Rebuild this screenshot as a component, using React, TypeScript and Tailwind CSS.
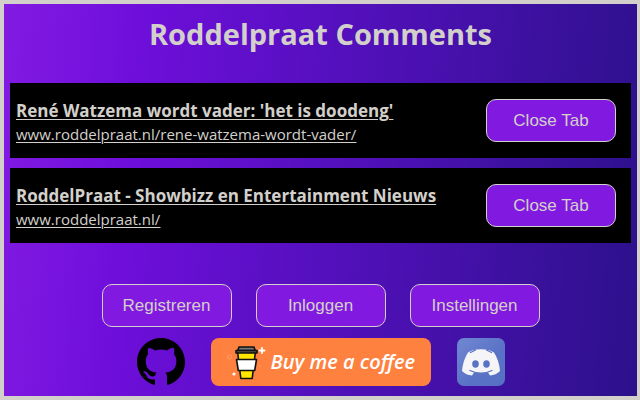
import React from "react";

type Tab = { title: string; url: string };

const tabs: Tab[] = [
  {
    title: "René Watzema wordt vader: 'het is doodeng'",
    url: "www.roddelpraat.nl/rene-watzema-wordt-vader/",
  },
  {
    title: "RoddelPraat - Showbizz en Entertainment Nieuws",
    url: "www.roddelpraat.nl/",
  },
];

function Button({ children }: { children: React.ReactNode }) {
  return (
    <button
      type="button"
      className="h-[43px] w-[130px] shrink-0 rounded-[10px] border border-[#d3d0cb] bg-[#8219e0] font-['Liberation_Sans',Arial,sans-serif] text-[17px] text-[#d3d0cb]"
    >
      {children}
    </button>
  );
}

function TabRow({ title, url }: Tab) {
  return (
    <li className="flex h-[75px] items-center justify-between bg-black pr-[15px] pl-[6px]">
      <div className="flex flex-col items-start pt-[2px] whitespace-nowrap underline decoration-1 underline-offset-2">
        <a href={`https://${url}`} className="text-[17px] leading-6 font-bold">
          {title}
        </a>
        <a href={`https://${url}`} className="text-[15px] leading-[22px]">
          {url}
        </a>
      </div>
      <Button>Close Tab</Button>
    </li>
  );
}

function GithubIcon() {
  return (
    <svg viewBox="0 0 16 16" className="size-12" fill="#000" aria-hidden="true">
      <path d="M8 0C3.58 0 0 3.58 0 8c0 3.54 2.29 6.53 5.47 7.59.4.07.55-.17.55-.38 0-.19-.01-.82-.01-1.49-2.01.37-2.53-.49-2.69-.94-.09-.23-.48-.94-.82-1.13-.28-.15-.68-.52-.01-.53.63-.01 1.08.58 1.23.82.72 1.21 1.87.87 2.33.66.07-.52.28-.87.51-1.07-1.78-.2-3.64-.89-3.64-3.95 0-.87.31-1.59.82-2.15-.08-.2-.36-1.02.08-2.12 0 0 .67-.21 2.2.82a7.6 7.6 0 0 1 4 0c1.53-1.04 2.2-.82 2.2-.82.44 1.1.16 1.92.08 2.12.51.56.82 1.27.82 2.15 0 3.07-1.87 3.75-3.65 3.95.29.25.54.73.54 1.48 0 1.07-.01 1.93-.01 2.2 0 .21.15.46.55.38A8.01 8.01 0 0 0 16 8c0-4.42-3.58-8-8-8z" />
    </svg>
  );
}

function CoffeeCup() {
  return (
    <svg viewBox="0 0 44 48" className="h-12 w-11 shrink-0" fill="none" aria-hidden="true">
      <path d="M14.500 13h18l-3.300 27.500h-11.400z" fill="#ffe500" stroke="#111" strokeWidth="1.6" strokeLinejoin="round" />
      <path d="M13.500 21.500h20l-1.800 11h-16.400z" fill="#fff" stroke="#111" strokeWidth="1.6" strokeLinejoin="round" />
      <path d="M16 9h15l1.200 3.500h-17.400z" fill="#777" stroke="#111" strokeWidth="1.6" strokeLinejoin="round" />
      <path d="M13 12.500h21v2.500H13z" fill="#555" stroke="#111" strokeWidth="1.6" strokeLinejoin="round" />
      <path d="M39 10v5M36.500 12.500h5" stroke="#fff" strokeWidth="1.8" strokeLinecap="round" />
      <circle cx="11" cy="36" r="1.600" fill="#fff" />
      <circle cx="6.500" cy="19" r="2" stroke="#ff9a68" strokeWidth="1" />
      <circle cx="37" cy="28" r="1" fill="#ff9a68" />
    </svg>
  );
}

function DiscordIcon() {
  return (
    <svg viewBox="0 0 48 48" className="size-12" aria-hidden="true">
      <defs>
        <linearGradient id="discord-tile" x1="0" y1="0" x2="1" y2="1">
          <stop offset="0" stopColor="#7088d2" />
          <stop offset="0.6" stopColor="#5a72c6" />
          <stop offset="1" stopColor="#5570c2" />
        </linearGradient>
      </defs>
      <rect width="48" height="48" rx="7" fill="url(#discord-tile)" />
      <path
        d="M15 12.500Q24 10 33 12.500L37 14.500Q42 22 43 33Q39 37 33 37.500L31 34.500Q24 36 17 34.500L15 37.500Q9 37 5 33Q6 22 11 14.500Z"
        fill="#f5f5f7"
      />
      <path d="M13 32.500Q24 38 35 32.500M13.500 14.500L18.500 12M34.500 14.500L29.500 12" fill="none" stroke="#5a72c6" strokeWidth="1.300" strokeLinecap="round" />
      <ellipse cx="18.500" cy="26" rx="3.300" ry="3.700" fill="#5a72c6" />
      <ellipse cx="29.500" cy="26" rx="3.300" ry="3.700" fill="#5a72c6" />
    </svg>
  );
}

export default function App() {
  return (
    <main className="min-h-screen border-4 border-r-[3px] border-[#d3d0cb] bg-linear-[95deg,#821be2_0%,#6f0edb_20%,#5510be_50%,#2c118b_100%] px-[6px] font-['Open_Sans','Noto_Sans',sans-serif] text-[#d3d0cb]">
      <h1 className="pt-[10px] text-center text-[29px] leading-10 font-bold">Roddelpraat Comments</h1>
      <ul className="mt-[29px] flex flex-col gap-[10px]">
        {tabs.map((tab) => (
          <TabRow key={tab.title} {...tab} />
        ))}
      </ul>
      <nav className="mt-[41px] flex justify-center gap-6">
        <Button>Registreren</Button>
        <Button>Inloggen</Button>
        <Button>Instellingen</Button>
      </nav>
      <footer className="mt-[11px] flex justify-center gap-[26px]">
        <a href="https://github.com" aria-label="GitHub">
          <GithubIcon />
        </a>
        <a
          href="https://www.buymeacoffee.com"
          className="flex h-12 w-[220px] items-center gap-1 rounded-lg bg-[#ff813f] pl-3 text-xl font-semibold whitespace-nowrap text-white italic"
        >
          <CoffeeCup />
          <span>Buy me a coffee</span>
        </a>
        <a href="https://discord.com" aria-label="Discord">
          <DiscordIcon />
        </a>
      </footer>
    </main>
  );
}
